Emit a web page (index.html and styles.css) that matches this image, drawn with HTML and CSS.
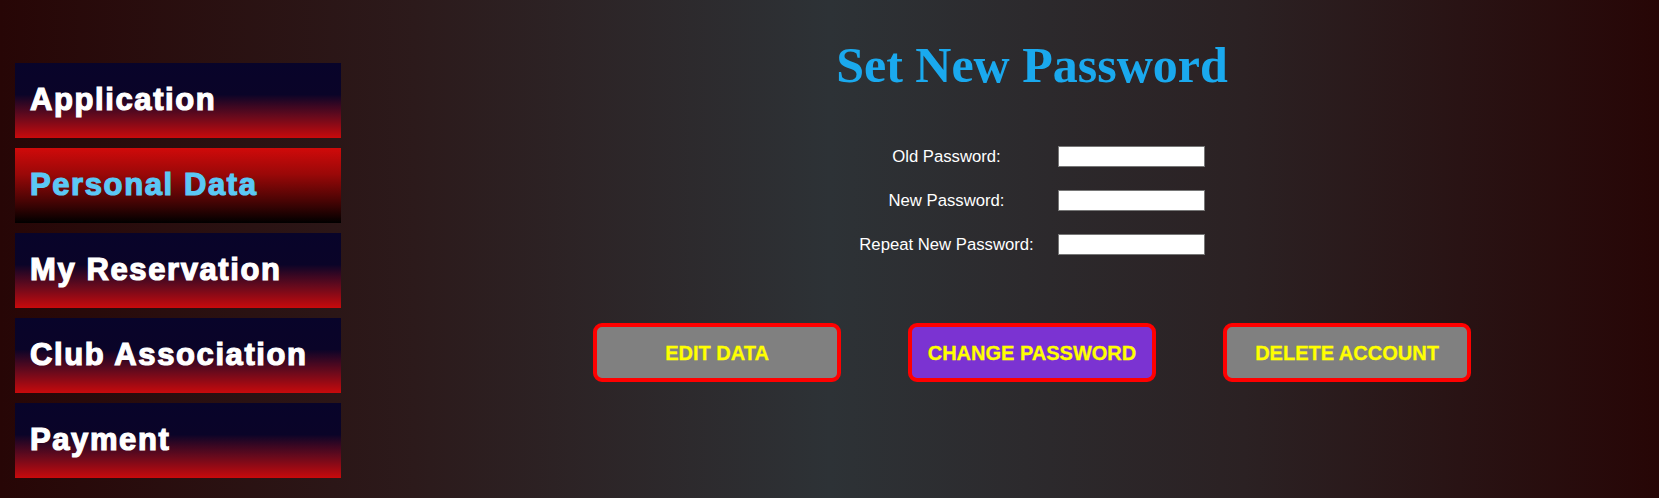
FILE: index.html
```html
<!DOCTYPE html>
<html lang="en">
<head>
<meta charset="utf-8">
<title>Set New Password</title>
<link rel="stylesheet" href="styles.css">
</head>
<body>
<div class="layout">
  <nav class="sidebar">
    <a class="nav-item" href="#">Application</a>
    <a class="nav-item active" href="#">Personal Data</a>
    <a class="nav-item" href="#">My Reservation</a>
    <a class="nav-item" href="#">Club Association</a>
    <a class="nav-item" href="#">Payment</a>
  </nav>
  <main class="main">
    <h1 class="title">Set New Password</h1>
    <form class="pw-form">
      <label class="pw-label" for="old">Old Password:</label>
      <input class="pw-input" id="old" type="password">
      <label class="pw-label" for="new">New Password:</label>
      <input class="pw-input" id="new" type="password">
      <label class="pw-label" for="rep">Repeat New Password:</label>
      <input class="pw-input" id="rep" type="password">
    </form>
    <div class="actions">
      <button class="btn" type="button">EDIT DATA</button>
      <button class="btn btn-active" type="button">CHANGE PASSWORD</button>
      <button class="btn" type="button">DELETE ACCOUNT</button>
    </div>
  </main>
</div>
</body>
</html>
```
FILE: styles.css
```css
html, body {
  margin: 0;
  padding: 0;
  height: 100%;
}
body {
  background: linear-gradient(to right, #270606 0%, #2c1a1b 25%, #2d3236 50%, #2b2123 75%, #270606 100%);
  font-family: "Liberation Sans", Arial, sans-serif;
  min-height: 498px;
}
.layout {
  display: flex;
  min-height: 498px;
}
.sidebar {
  width: 405px;
  box-sizing: border-box;
  padding: 63px 0 0 15px;
  display: flex;
  flex-direction: column;
  gap: 10px;
  flex: none;
}
.nav-item {
  display: block;
  width: 326px;
  height: 75px;
  box-sizing: border-box;
  padding: 19px 0 0 15px;
  line-height: 36px;
  font-family: "Liberation Sans", Arial, sans-serif;
  font-weight: bold;
  font-size: 31px;
  letter-spacing: 1.6px;
  color: #ffffff;
  -webkit-text-stroke: 1.2px #ffffff;
  text-decoration: none;
  background: linear-gradient(to bottom, #08042a 0%, #0a0428 42%, #6a0a1c 72%, #c80a0c 100%);
}
.nav-item.active {
  color: #5bc8f5;
  -webkit-text-stroke: 1.2px #5bc8f5;
  background: linear-gradient(to bottom, #d00a0a 0%, #9a0808 35%, #4a0404 70%, #000000 100%);
}
.main {
  flex: 1;
  display: flex;
  flex-direction: column;
  align-items: center;
  padding-top: 36px;
}
.title {
  margin: 0;
  font-family: "Liberation Serif", "Times New Roman", serif;
  font-weight: bold;
  font-size: 50px;
  line-height: 58px;
  color: #1aa9ee;
}
.pw-form {
  margin-top: 52px;
  display: grid;
  grid-template-columns: 175px 147px;
  grid-auto-rows: 21px;
  column-gap: 24px;
  row-gap: 23px;
  align-items: center;
}
.pw-label {
  text-align: center;
  color: #ffffff;
  font-size: 16.7px;
  line-height: 21px;
  height: 21px;
  white-space: nowrap;
}
.pw-input {
  width: 147px;
  height: 21px;
  box-sizing: border-box;
  margin: 0;
  border: 1px solid #767676;
  background: #ffffff;
  padding: 0 2px;
}
.actions {
  margin-top: 68px;
  display: flex;
  gap: 67px;
}
.btn {
  width: 248px;
  height: 59px;
  box-sizing: border-box;
  border: 4px solid #ff0000;
  border-radius: 9px;
  background: #808080;
  color: #ffff00;
  font-family: "Liberation Sans", Arial, sans-serif;
  font-weight: bold;
  font-size: 20px;
  padding: 2px 0 0;
  -webkit-text-stroke: 0.3px #ffff00;
  cursor: pointer;
}
.btn-active {
  background: #7b33d2;
}
```
